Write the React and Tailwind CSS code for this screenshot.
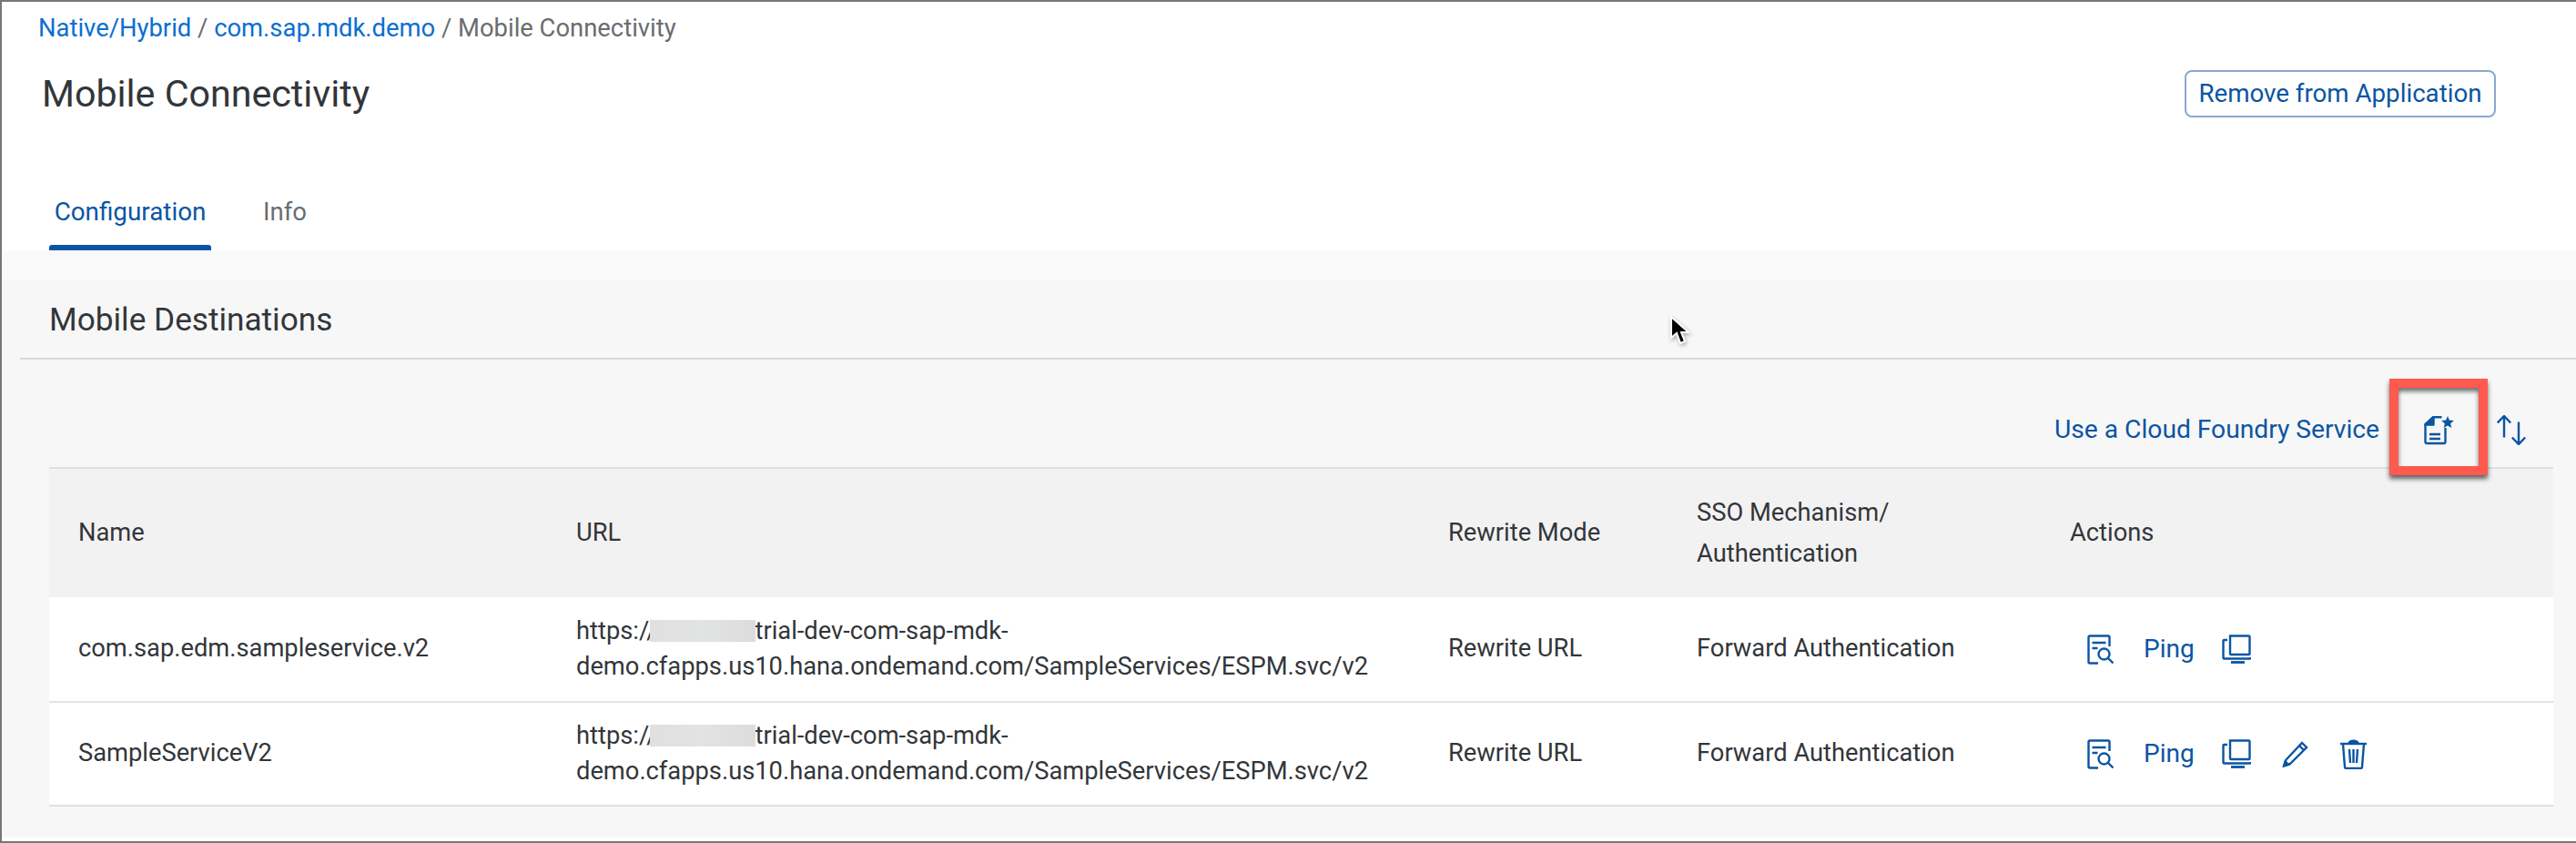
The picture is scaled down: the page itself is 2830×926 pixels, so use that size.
const F = "font-['Roboto',sans-serif]";

const Svg = ({ w, h, vb, children, className = "" }) => (
  <svg width={w} height={h} viewBox={vb} fill="none" stroke="#0a55a3" strokeWidth="2.4" className={"block shrink-0 " + className}>
    {children}
  </svg>
);

const DocSearch = () => (
  <Svg w={29} h={33} vb="0 0 29 33">
    <path d="M12 31.500H3a1.500 1.500 0 0 1-1.500-1.500V3A1.500 1.500 0 0 1 3 1.500h20A1.500 1.500 0 0 1 24.500 3v10" />
    <path d="M5.500 9h15M5.500 15h6" />
    <circle cx="18.500" cy="21.500" r="6" />
    <path d="M23 26l5.500 5.500" />
  </Svg>
);

const Monitors = () => (
  <Svg w={32} h={32} vb="0 0 32 32">
    <path d="M9 1.500h20.500a1 1 0 0 1 1 1V21a1 1 0 0 1-1 1H10a1 1 0 0 1-1-1z" />
    <path d="M6 6H2.500a1 1 0 0 0-1 1v18.500a1 1 0 0 0 1 1h28a1 1 0 0 0 1-1V25" />
    <path d="M10 30.500h15" strokeWidth="2.800" />
  </Svg>
);

const Pencil = () => (
  <Svg w={29} h={29} vb="0 0 29 29">
    <path d="M22 2l5 5L9 25l-6.500 2 2-6.500z" />
    <path d="M19 5l5 5" />
    <path d="M2 27.500l1.500-5 3.500 3.500z" fill="#0a55a3" />
  </Svg>
);

const Trash = () => (
  <Svg w={29} h={33} vb="0 0 29 33">
    <path d="M0 5h29" />
    <path d="M10 3.500c1-2.500 8-2.500 9 0z" fill="#0a55a3" />
    <path d="M3 5l2 25.500c0 1 .5 1.500 1.500 1.500h16c1 0 1.500-.5 1.500-1.500L26 5" />
    <path d="M10 11l1 15M14.500 11v15M19 11l-1 15" />
  </Svg>
);

const DocStar = () => (
  <Svg w={33} h={33} vb="0 0 33 33">
    <path d="M19.500 2.200H10L1.500 10v19.500a1.500 1.500 0 0 0 1.500 1.500h19a1.500 1.500 0 0 0 1.500-1.500V14" />
    <path d="M10.500 2L1.500 10.500h9z" fill="#0a55a3" stroke="#0a55a3" strokeLinejoin="round" />
    <path d="M6 21h12M6 26h12" />
    <path d="M26 1l1.900 4.600 5 .4-3.800 3.200 1.200 4.800L26 11.400 21.700 14l1.200-4.800L19.100 6l5-.4z" fill="#0a55a3" stroke="none" />
  </Svg>
);

const Sort = () => (
  <Svg w={33} h={33} vb="0 0 33 33">
    <path d="M8 24.500V1M.8 8.500L8 1l7.200 7.500" />
    <path d="M24 7.500V32M16.800 24.500L24 32l7.200-7.500" />
  </Svg>
);

const Cursor = () => (
  <svg width="24" height="34" viewBox="0 0 24 34" className="absolute left-[1832px] top-[344px] drop-shadow-[1px_2px_2px_rgba(0,0,0,0.3)]">
    <path d="M2 2v23l6-5 4 11 5-2-4-10h8z" fill="#000" stroke="#fff" strokeWidth="2" />
  </svg>
);

const Url = () => (
  <div className="relative leading-[39px]">
    <span className="absolute left-[81px] top-[7px] h-[24px] w-[116px] bg-gradient-to-r from-[#e0e0e0] via-[#e2e3e3] to-[#dcdcdc]" />
    <div>https://<span className="inline-block w-[108px]" />trial-dev-com-sap-mdk-</div>
    <div>demo.cfapps.us10.hana.ondemand.com/SampleServices/ESPM.svc/v2</div>
  </div>
);

const Actions = ({ extra }) => (
  <div className="ml-[19px] flex items-center">
    <DocSearch />
    <span className="ml-[33px] text-[28px] text-[#0a55a3]">Ping</span>
    <span className="ml-[30px]"><Monitors /></span>
    {extra && (
      <>
        <span className="ml-[34px]"><Pencil /></span>
        <span className="ml-[35px]"><Trash /></span>
      </>
    )}
  </div>
);

const grid = "grid grid-cols-[547px_958px_273px_410px_1fr] items-center";
const rows = [{ name: "com.sap.edm.sampleservice.v2" }, { name: "SampleServiceV2", extra: true }];

export default function App() {
  return (
    <div className={"relative h-[926px] w-[2830px] overflow-hidden bg-white border-t-2 border-l-2 border-[#777777] text-[27.3px] text-[#32363a] " + F}>
      {/* Header */}
      <header className="h-[274px] bg-white">
        <nav className="pl-[40px] pt-[11px] text-[27.4px] leading-[36px] text-[#6a6d70]">
          <span className="text-[#0a6ed1]">Native/Hybrid</span> / <span className="text-[#0a6ed1]">com.sap.mdk.demo</span> / Mobile Connectivity
        </nav>
        <div className="flex items-center justify-between pl-[44px] pr-[88px] pt-[27px]">
          <h1 className="text-[41.2px] leading-[54px]">Mobile Connectivity</h1>
          <button className="-mt-[1px] h-[52px] w-[342px] rounded-[8px] border-2 border-[#89a9d1] text-[27.7px] text-[#0a55a3]">Remove from Application</button>
        </div>
        <div className="mt-[35px] flex h-[110px] items-stretch pl-[52px]">
          <div className="flex w-[178px] flex-col justify-between">
            <span className="mt-[47px] text-center text-[27.8px] text-[#0a55a3]">Configuration</span>
            <span className="h-[6px] rounded-t-[3px] bg-[#0a55a3]" />
          </div>
          <span className="ml-[57px] mt-[47px] text-[27.5px] text-[#6a6d70]">Info</span>
        </div>
      </header>

      {/* Body */}
      <main className="h-[644px] bg-gradient-to-b from-[#f9f9f9] from-[4.8%] to-[#f7f7f7] to-[5%]">
        <section className="pl-[20px]">
          <h2 className="flex h-[119px] items-end border-b-2 border-[#d9d9d9] pb-[19px] pl-[32px] text-[35.2px] leading-[46px]">Mobile Destinations</h2>
          <div className="mr-[25px] ml-[32px]">
            <div className="flex h-[118px] items-end justify-end pb-[24px]">
              <span className="-mb-[1px] text-[28.2px] leading-[36px] text-[#0a55a3]">Use a Cloud Foundry Service</span>
              <span className="relative ml-[49px]">
                <DocStar />
                <span className="absolute left-[-38px] top-[-40px] h-[106px] w-[108px] border-[10px] border-[#ff5a4d] shadow-[0_4px_5px_rgba(0,0,0,0.6),inset_0_4px_5px_rgba(0,0,0,0.55)]" />
              </span>
              <span className="ml-[47px] mr-[29px]"><Sort /></span>
            </div>
            <div className="border-y-2 border-[#e0e0e0]">
              <div className={grid + " h-[141px] bg-[#f2f2f2] px-[32px]"}>
                <span>Name</span>
                <span>URL</span>
                <span>Rewrite Mode</span>
                <span className="leading-[45px]">SSO Mechanism/<br />Authentication</span>
                <span>Actions</span>
              </div>
              {rows.map((r, i) => (
                <div key={r.name} className={grid + " h-[114px] bg-white px-[32px] " + (i ? "border-t-2 border-[#e4e4e4]" : "")}>
                  <span className="-mt-[2px]">{r.name}</span>
                  <Url />
                  <span className="-mt-[2px]">Rewrite URL</span>
                  <span className="-mt-[2px]">Forward Authentication</span>
                  <Actions extra={r.extra} />
                </div>
              ))}
            </div>
          </div>
        </section>
      </main>
      <div className="mt-[4px] h-[2px] bg-[#777777]" />
      <Cursor />
    </div>
  );
}
